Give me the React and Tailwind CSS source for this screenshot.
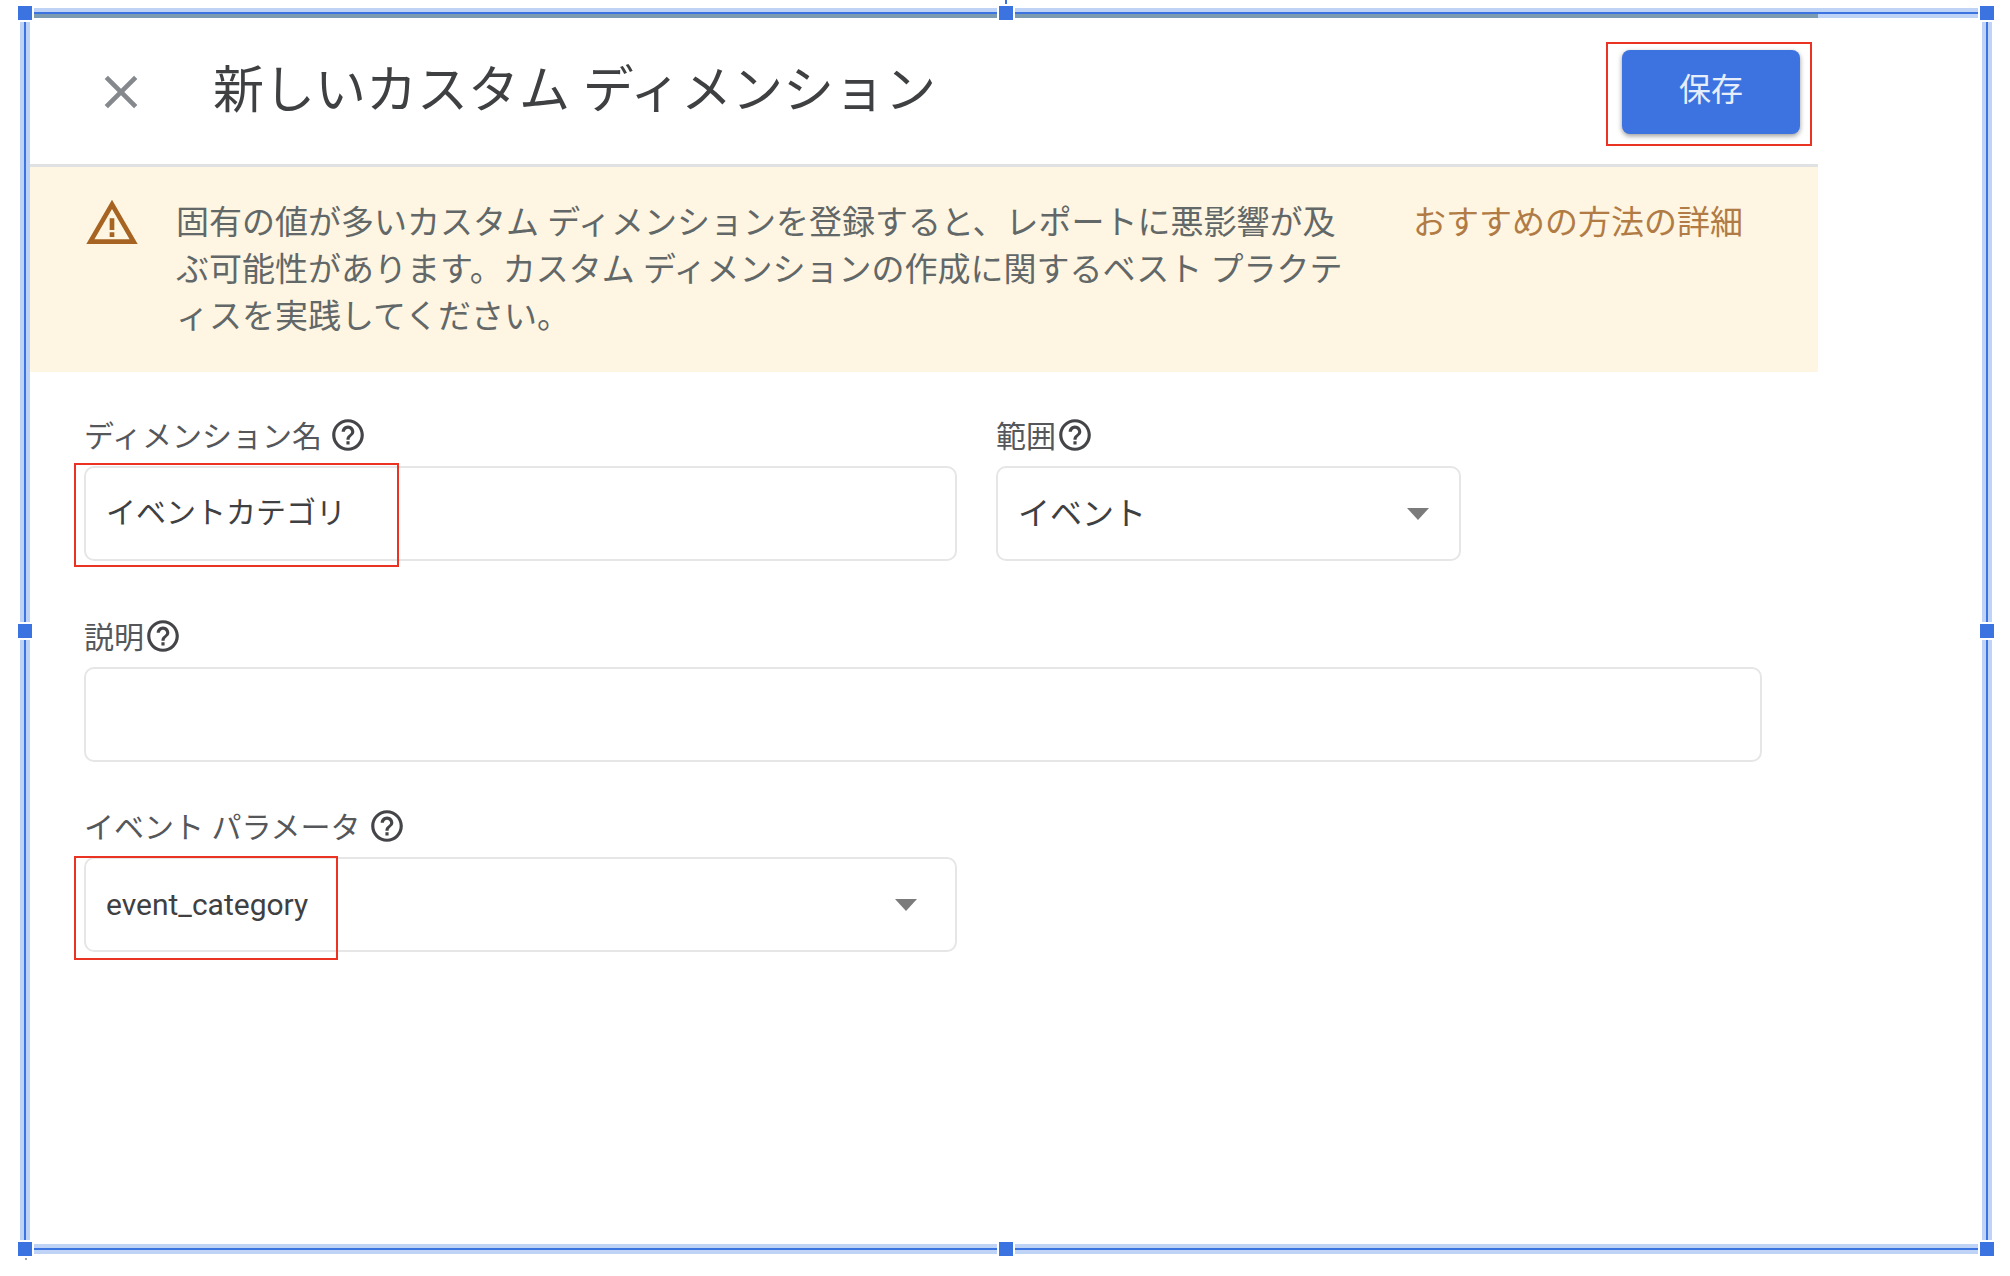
import { MdClose, MdHelpOutline, MdWarningAmber } from 'react-icons/md'

const handles = [
  '-left-2 -top-2',
  'left-1/2 -top-2 -translate-x-1/2',
  '-right-2 -top-2',
  '-left-2 top-1/2 -translate-y-1/2',
  '-right-2 top-1/2 -translate-y-1/2',
  '-left-2 -bottom-2',
  'left-1/2 -bottom-2 -translate-x-1/2',
  '-right-2 -bottom-2',
]

const fieldClass =
  'block w-full h-[95px] rounded-[10px] border-2 border-[#e6e6e6] bg-white px-5 text-[#3f4042] outline-none appearance-none'

// Red outline drawn over the parts the reader has to look at
function Highlight({ className }) {
  return <div className={`absolute border-2 border-[#ea3323] pointer-events-none ${className}`} />
}

function FieldLabel({ htmlFor, children }) {
  return (
    <div className="flex items-center mb-3 h-[38px] text-[30px] leading-[38px] text-[#55575a]">
      <label htmlFor={htmlFor} className="pt-1 whitespace-pre">{children}</label>
      <button type="button" aria-label="ヘルプ" className="shrink-0">
        <MdHelpOutline className="size-[38px] text-[#444548]" />
      </button>
    </div>
  )
}

function Arrow({ className }) {
  return (
    <svg viewBox="0 0 22 12" className={`absolute top-1/2 -translate-y-1/2 w-[22px] h-3 text-[#7b7b7b] pointer-events-none ${className}`}>
      <path d="M0 0h22L11 12z" fill="currentColor" />
    </svg>
  )
}

function Header() {
  return (
    <header className="flex items-center h-[149px] pt-0.5 pl-[63px] pr-[18px] border-b-[3px] border-[#e0e1e3]">
      <button type="button" aria-label="閉じる">
        <MdClose className="size-14 text-[#85888d]" />
      </button>
      <h1 className="ml-16 flex-1 pb-0.5 text-[51px] leading-[60px] text-[#3f4042]">新しいカスタム ディメンション</h1>
      <div className="relative">
        <button
          type="button"
          className="block w-[178px] h-[84px] pb-1 rounded-lg bg-[#3c73e0] text-[32px] text-[#e6edfb] shadow-[0_2px_5px_rgba(0,0,0,0.4)]"
        >
          保存
        </button>
        <Highlight className="-left-4 -right-3 -top-2 -bottom-3" />
      </div>
    </header>
  )
}

function Notice() {
  return (
    <section className="flex items-start bg-[#fef6e2] pl-[54px] pr-[75px] pt-7 pb-8 text-[33px] leading-[47px]">
      <MdWarningAmber className="size-14 shrink-0 text-[#a66322]" />
      <p className="ml-9 mt-1 flex-1 text-[#626768]">
        固有の値が多いカスタム ディメンションを登録すると、レポートに悪影響が及<br />
        ぶ可能性があります。カスタム ディメンションの作成に関するベスト プラクテ<br />
        ィスを実践してください。
      </p>
      <a href="#best-practice" className="mt-1 shrink-0 text-[#b17b45]">おすすめの方法の詳細</a>
    </section>
  )
}

export default function App() {
  return (
    <main
      lang="ja"
      className="relative flex flex-col min-h-screen bg-white pt-2 pl-5 pr-[18px] pb-[22px] font-[Roboto,'Noto_Sans_CJK_JP',sans-serif]"
    >
      <div className="absolute left-1/2 top-0 h-1 w-0.5 bg-[#3b73e0]" />
      <div className="relative flex flex-col flex-1 border-4 border-[#bfd3f6]">
        <div className="flex flex-col flex-1 border-2 border-[#3b73e0]">
          <div className="flex-1 border-4 border-[#bfd3f6]">
            <div className="relative mr-[164px]">
              <div className="absolute inset-x-0 -top-1 h-1 bg-[#7a9bb0]" />
              <Header />
              <Notice />
              <form className="pt-11 pl-[54px] pr-14" onSubmit={(e) => e.preventDefault()}>
                <div className="grid grid-cols-[873fr_465fr_262fr] gap-[39px]">
                  <div>
                    <FieldLabel htmlFor="name">{'ディメンション名 '}</FieldLabel>
                    <div className="relative">
                      <input id="name" type="text" defaultValue="イベントカテゴリ" className={`${fieldClass} pb-2 text-[30px]`} />
                      <Highlight className="-left-2.5 -top-[3px] w-[325px] h-[104px]" />
                    </div>
                  </div>
                  <div>
                    <FieldLabel htmlFor="scope">範囲</FieldLabel>
                    <div className="relative">
                      <select id="scope" className={`${fieldClass} text-[32px]`}>
                        <option>イベント</option>
                      </select>
                      <Arrow className="right-8" />
                    </div>
                  </div>
                </div>
                <div className="mt-14">
                  <FieldLabel htmlFor="description">説明</FieldLabel>
                  <input id="description" type="text" className={`${fieldClass} text-[30px]`} />
                </div>
                <div className="mt-[45px] w-[52%]">
                  <FieldLabel htmlFor="parameter">{'イベント パラメータ '}</FieldLabel>
                  <div className="relative">
                    <select id="parameter" className={`${fieldClass} text-[30px]`}>
                      <option>event_category</option>
                    </select>
                    <Arrow className="right-10" />
                    <Highlight className="-left-2.5 -top-px w-[264px] h-[104px]" />
                  </div>
                </div>
              </form>
            </div>
          </div>
        </div>
        {handles.map((position) => (
          <span key={position} className={`absolute size-[18px] border-2 border-white bg-[#3b73e0] ${position}`} />
        ))}
      </div>
      <div className="absolute left-[25px] bottom-4 size-0.5 bg-[#a3a3a3]" />
    </main>
  )
}
